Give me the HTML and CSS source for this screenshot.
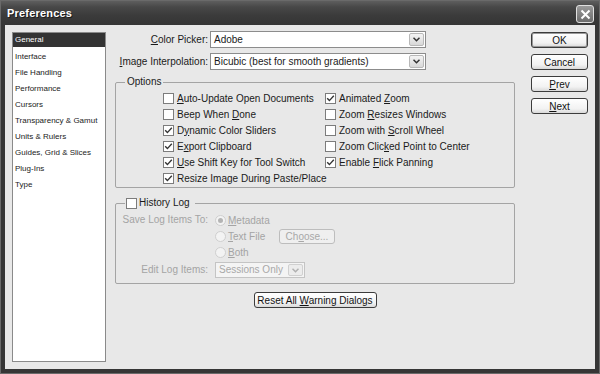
FILE: index.html
```html
<!DOCTYPE html>
<html>
<head>
<meta charset="utf-8">
<title>Preferences</title>
<link rel="stylesheet" href="styles.css">
</head>
<body>
<div class="window">
  <div class="titlebar">
    <span class="title">Preferences</span>
    <span class="close"><svg width="11" height="11" viewBox="0 0 11 11"><path d="M1.5 1.5 L9.5 9.5 M9.5 1.5 L1.5 9.5" stroke="#fff" stroke-width="2" fill="none"/></svg></span>
  </div>
  <div class="client">
    <ul class="nav">
      <li class="sel">General</li>
      <li>Interface</li>
      <li>File Handling</li>
      <li>Performance</li>
      <li>Cursors</li>
      <li>Transparency &amp; Gamut</li>
      <li>Units &amp; Rulers</li>
      <li>Guides, Grid &amp; Slices</li>
      <li>Plug-Ins</li>
      <li>Type</li>
    </ul>
    <div class="main">
      <div class="pickers">
        <span class="flabel"><u>C</u>olor Picker:</span>
        <div class="select"><span class="val">Adobe</span><span class="arrow"><svg width="7" height="5" viewBox="0 0 7 5"><path d="M0.5 0.8 L3.5 3.8 L6.5 0.8" stroke="#333" stroke-width="1.5" fill="none"/></svg></span></div>
        <span class="flabel"><u>I</u>mage Interpolation:</span>
        <div class="select"><span class="val">Bicubic (best for smooth gradients)</span><span class="arrow"><svg width="7" height="5" viewBox="0 0 7 5"><path d="M0.5 0.8 L3.5 3.8 L6.5 0.8" stroke="#333" stroke-width="1.5" fill="none"/></svg></span></div>
      </div>

      <fieldset class="group options">
        <legend class="legend">Options</legend>
        <div class="opt-cols">
          <div class="col col-left">
            <div class="chk"><span class="cb"></span><span><u>A</u>uto-Update Open Documents</span></div>
            <div class="chk"><span class="cb"></span><span>Beep When <u>D</u>one</span></div>
            <div class="chk"><span class="cb on"><svg width="9" height="9" viewBox="0 0 9 9"><path d="M1.2 4.3 L3.4 6.6 L7.8 1.8" stroke="#333" stroke-width="1.4" fill="none"/></svg></span><span>D<u>y</u>namic Color Sliders</span></div>
            <div class="chk"><span class="cb on"><svg width="9" height="9" viewBox="0 0 9 9"><path d="M1.2 4.3 L3.4 6.6 L7.8 1.8" stroke="#333" stroke-width="1.4" fill="none"/></svg></span><span>E<u>x</u>port Clipboard</span></div>
            <div class="chk"><span class="cb on"><svg width="9" height="9" viewBox="0 0 9 9"><path d="M1.2 4.3 L3.4 6.6 L7.8 1.8" stroke="#333" stroke-width="1.4" fill="none"/></svg></span><span><u>U</u>se Shift Key for Tool Switch</span></div>
            <div class="chk"><span class="cb on"><svg width="9" height="9" viewBox="0 0 9 9"><path d="M1.2 4.3 L3.4 6.6 L7.8 1.8" stroke="#333" stroke-width="1.4" fill="none"/></svg></span><span>Resize Image During Paste/Place</span></div>
          </div>
          <div class="col col-right">
            <div class="chk"><span class="cb on"><svg width="9" height="9" viewBox="0 0 9 9"><path d="M1.2 4.3 L3.4 6.6 L7.8 1.8" stroke="#333" stroke-width="1.4" fill="none"/></svg></span><span>Animated <u>Z</u>oom</span></div>
            <div class="chk"><span class="cb"></span><span>Zoom <u>R</u>esizes Windows</span></div>
            <div class="chk"><span class="cb"></span><span>Zoom with <u>S</u>croll Wheel</span></div>
            <div class="chk"><span class="cb"></span><span>Zoom Clic<u>k</u>ed Point to Center</span></div>
            <div class="chk"><span class="cb on"><svg width="9" height="9" viewBox="0 0 9 9"><path d="M1.2 4.3 L3.4 6.6 L7.8 1.8" stroke="#333" stroke-width="1.4" fill="none"/></svg></span><span>Enable <u>F</u>lick Panning</span></div>
          </div>
        </div>
      </fieldset>

      <fieldset class="group history">
        <legend class="legend legend-chk"><span class="cb"></span><span>History Log</span></legend>
        <div class="hist-grid">
          <span class="hlabel">Save Log Items To:</span>
          <div class="radios">
            <div class="radio-row"><span class="rb on"></span><span class="rlabel"><u>M</u>etadata</span></div>
            <div class="radio-row"><span class="rb"></span><span class="rlabel wide"><u>T</u>ext File</span><span class="btn btn-dis"><span>Ch<u>o</u>ose...</span></span></div>
            <div class="radio-row"><span class="rb"></span><span class="rlabel"><u>B</u>oth</span></div>
          </div>
          <span class="hlabel edit">Edit Log Items:</span>
          <div class="select select-dis"><span class="val">Sessions Only</span><span class="arrow"><svg width="7" height="5" viewBox="0 0 7 5"><path d="M0.5 0.8 L3.5 3.8 L6.5 0.8" stroke="#b0b0b0" stroke-width="1.5" fill="none"/></svg></span></div>
        </div>
      </fieldset>

      <div class="reset-row"><span class="btn reset"><span>Reset All <u>W</u>arning Dialogs</span></span></div>
    </div>
    <div class="actions">
      <span class="btn act default"><span>OK</span></span>
      <span class="btn act"><span>Cancel</span></span>
      <span class="btn act"><span><u>P</u>rev</span></span>
      <span class="btn act"><span><u>N</u>ext</span></span>
    </div>
  </div>
</div>
</body>
</html>
```

FILE: styles.css
```css
* { box-sizing: border-box; }
html, body { margin: 0; padding: 0; background: #3a3a3a; }
body { font-family: "Liberation Sans", Arial, sans-serif; font-size: 10px; color: #1a1a1a; }
u { text-decoration: underline; text-underline-offset: 1px; }

.window {
  width: 600px;
  height: 374px;
  background: #363636;
  border: 1px solid #6a6a6a;
  display: flex;
  flex-direction: column;
}

.titlebar {
  height: 24px;
  flex: none;
  display: flex;
  align-items: center;
  justify-content: space-between;
  padding: 0 5px 0 6px;
  background: linear-gradient(to bottom, #5e5e5e 0%, #484848 25%, #3b3b3b 60%, #353535 100%);
}
.title {
  color: #fff;
  font-weight: bold;
  font-size: 11px;
  letter-spacing: 0.2px;
  text-shadow: 1px 1px 0 #1c1c1c;
}
.close {
  width: 18px;
  height: 18px;
  margin-top: 2px;
  border: 1px solid #e0e0e0;
  border-radius: 3px;
  background: linear-gradient(#9a9a9a, #6c6c6c);
  display: flex;
  align-items: center;
  justify-content: center;
}

.client {
  height: 344px;
  margin: 0 4px;
  background: #e8e8e8;
  display: flex;
  align-items: flex-start;
  padding: 6px 0 0 7px;
}

.nav {
  list-style: none;
  margin: 1px 0 0 0;
  padding: 0;
  width: 94px;
  height: 330px;
  background: #fff;
  border: 1px solid #8a8a8a;
  font-size: 8px;
}
.nav li {
  height: 16px;
  line-height: 15px;
  padding-left: 2px;
  white-space: nowrap;
  color: #222;
}
.nav li.sel {
  background: #333;
  color: #fff;
  height: 14px;
  line-height: 14px;
  margin-bottom: 2px;
}

.main {
  width: 400px;
  margin-left: 9px;
  display: flex;
  flex-direction: column;
}

.pickers {
  display: grid;
  grid-template-columns: 93px 216px;
  column-gap: 2px;
  row-gap: 5px;
  margin-top: 0;
}
.flabel {
  text-align: right;
  line-height: 17px;
  white-space: nowrap;
}
.select {
  height: 17px;
  background: #fff;
  border: 1px solid #8c8c8c;
  display: flex;
  align-items: stretch;
}
.select .val {
  flex: 1;
  line-height: 15px;
  padding-left: 3px;
  white-space: nowrap;
}
.select .arrow {
  width: 15px;
  margin: 1px;
  border: 1px solid #b8b8b8;
  border-radius: 2px;
  background: linear-gradient(#f4f4f4, #d8d8d8);
  display: flex;
  align-items: center;
  justify-content: center;
}
.select-dis { border-color: #c4c4c4; background: #f4f4f4; width: 90px; }
.select-dis .val { color: #a8a8a8; }
.select-dis .arrow { border-color: #d0d0d0; background: #ececec; }

.group {
  margin: 0;
  padding: 0;
  min-width: 0;
  border: 1px solid #a4a4a4;
  border-radius: 2px;
}
.legend {
  margin-left: 9px;
  padding: 0 2px;
  line-height: 12px;
  font-size: 10px;
}
.options { margin-top: 6px; }
.opt-cols {
  display: flex;
  padding: 2px 0 1px 47px;
}
.col { display: flex; flex-direction: column; }
.col-left { width: 162px; }
.chk {
  height: 16px;
  display: flex;
  align-items: center;
  gap: 3px;
  white-space: nowrap;
}
.cb {
  width: 11px;
  height: 11px;
  flex: none;
  background: #fff;
  border: 1px solid #7c7c7c;
  display: inline-flex;
  align-items: center;
  justify-content: center;
}

.history { margin-top: 9px; }
.legend-chk {
  display: flex;
  align-items: center;
  gap: 2px;
  padding: 0 5px 0 1px;
}
.hist-grid {
  display: grid;
  grid-template-columns: 92px auto;
  column-gap: 7px;
  padding: 3px 0 5px 0;
  color: #a4a4a4;
}
.hlabel {
  text-align: right;
  line-height: 16px;
  white-space: nowrap;
  align-self: start;
}
.hlabel.edit { margin-top: 2px; }
.history .select-dis { margin-top: 2px; height: 16px; }
.history .select-dis .val { line-height: 14px; }
.radios { display: flex; flex-direction: column; }
.radio-row {
  height: 16px;
  display: flex;
  align-items: center;
  gap: 2px;
}
.rb {
  width: 11px;
  height: 11px;
  border-radius: 50%;
  border: 1px solid #cfcfcf;
  background: #f3f3f3;
  display: inline-flex;
  align-items: center;
  justify-content: center;
}
.rb.on::after {
  content: "";
  width: 5px;
  height: 5px;
  border-radius: 50%;
  background: #b4b4b4;
}
.rlabel.wide { width: 49px; }

.btn {
  display: inline-flex;
  align-items: center;
  justify-content: center;
  height: 16px;
  border: 1px solid #3c3c3c;
  border-radius: 3px;
  background: linear-gradient(#ffffff, #f2f2f2 70%, #d9d9d9);
  white-space: nowrap;
  color: #111;
}
.btn-dis {
  width: 56px;
  height: 15px;
  border-color: #bdbdbd;
  background: #efefef;
  color: #a8a8a8;
}
.reset-row {
  display: flex;
  justify-content: center;
  margin-top: 8px;
}
.reset { width: 123px; }

.actions {
  margin-left: 16px;
  margin-top: 1px;
  width: 57px;
  display: flex;
  flex-direction: column;
  gap: 6px;
}
.act { width: 57px; }
.default { border-width: 1px; box-shadow: inset 0 0 0 1px #9a9a9a; }
```
